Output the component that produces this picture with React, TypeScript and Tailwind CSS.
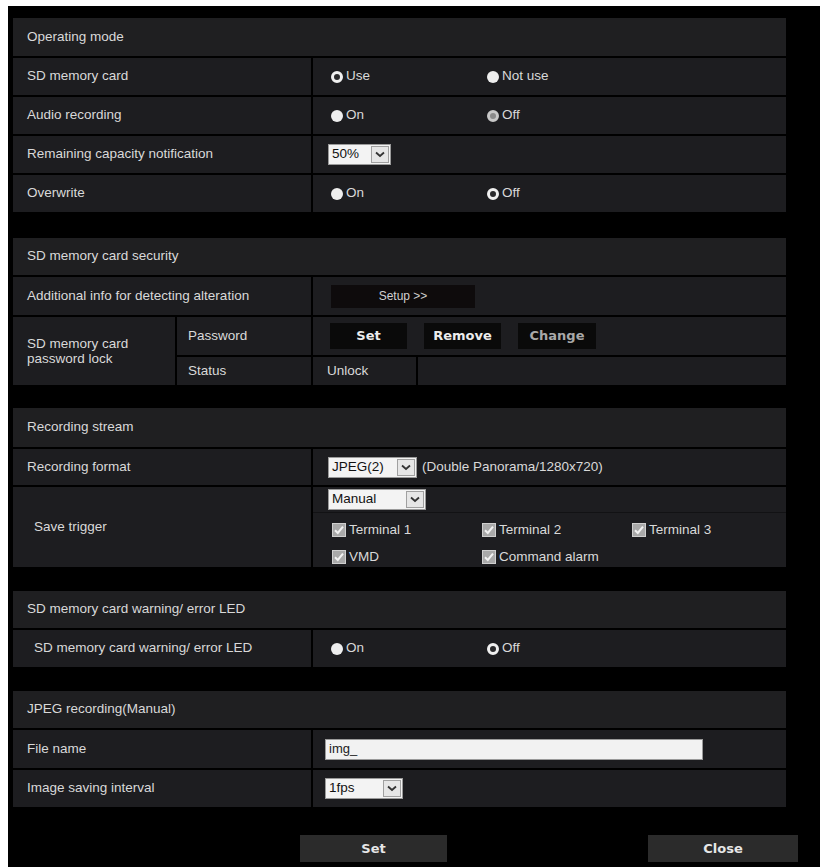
import React from 'react';

const font = { fontFamily: '"Liberation Sans", Arial, sans-serif' };

function Radio({ checked, dim, label }: { checked?: boolean; dim?: boolean; label: string }) {
  return (
    <span className="flex items-center gap-[3px]">
      {checked ? (
        <span className={`w-[12px] h-[12px] rounded-full border-[3px] ${dim ? 'border-[#c8c8c8] bg-[#8a8a8a]' : 'border-[#f0f0f0] bg-[#2a2a2c]'}`}></span>
      ) : (
        <span className="w-[12px] h-[12px] rounded-full bg-[#eeeeee]"></span>
      )}
      <span>{label}</span>
    </span>
  );
}

function Check({ label }: { label: string }) {
  return (
    <span className="flex items-center gap-[3px]">
      <svg width="14" height="14" viewBox="0 0 14 14">
        <rect x="0.5" y="0.5" width="13" height="13" fill="#a9a9a9" stroke="#cfcfcf" />
        <path d="M3 7.2 L5.8 10 L11 3.6" fill="none" stroke="#f2f2f2" strokeWidth="2" />
      </svg>
      <span>{label}</span>
    </span>
  );
}

function Select({ value, width }: { value: string; width: string }) {
  return (
    <span className={`flex items-stretch h-[21px] bg-[#f3f3f3] border border-[#9a9a9a] text-[#111] ${width}`}>
      <span className="flex-1 flex items-center pl-[3px] text-[13.5px]">{value}</span>
      <span className="w-[18px] my-[1px] mr-[1px] border border-[#a0a0a0] bg-[#e6e6e6] flex items-center justify-center">
        <svg width="10" height="7" viewBox="0 0 10 7">
          <path d="M1 1.5 L5 5 L9 1.5" fill="none" stroke="#333" strokeWidth="1.8" />
        </svg>
      </span>
    </span>
  );
}

function Header({ title, h }: { title: string; h: string }) {
  return <div className={`bg-[#1f1f21] flex items-center pl-[14px] ${h}`}>{title}</div>;
}

function Row({ label, h, children, indent }: { label: string; h: string; children?: React.ReactNode; indent?: boolean }) {
  return (
    <div className={`flex gap-[2px] ${h}`}>
      <div className={`w-[298px] bg-[#1d1d20] flex items-center ${indent ? 'pl-[21px]' : 'pl-[14px]'}`}>{label}</div>
      <div className="flex-1 bg-[#1d1d20] flex items-center pl-[18px]">{children}</div>
    </div>
  );
}

function RadioPair({ a, b }: { a: React.ReactNode; b: React.ReactNode }) {
  return (
    <div className="flex items-center">
      <div className="w-[156px]">{a}</div>
      <div>{b}</div>
    </div>
  );
}

export default function App() {
  return (
    <div className="w-[820px] h-[867px] bg-white overflow-hidden text-[13.5px] text-[#d9d9d9]" style={font}>
      <div className="ml-[8px] mt-[6px] h-[861px] bg-black pt-[12px] pl-[5px]">
        <div className="w-[773px] flex flex-col">
          {/* Operating mode */}
          <div className="flex flex-col gap-[2px]">
            <Header title="Operating mode" h="h-[38px]" />
            <Row label="SD memory card" h="h-[37px]">
              <RadioPair a={<Radio checked label="Use" />} b={<Radio label="Not use" />} />
            </Row>
            <Row label="Audio recording" h="h-[37px]">
              <RadioPair a={<Radio label="On" />} b={<Radio checked dim label="Off" />} />
            </Row>
            <Row label="Remaining capacity notification" h="h-[37px]">
              <div className="-ml-[3px]">
                <Select value="50%" width="w-[63px]" />
              </div>
            </Row>
            <Row label="Overwrite" h="h-[37px]">
              <RadioPair a={<Radio label="On" />} b={<Radio checked label="Off" />} />
            </Row>
          </div>

          {/* SD memory card security */}
          <div className="flex flex-col gap-[2px] mt-[26px]">
            <Header title="SD memory card security" h="h-[37px]" />
            <Row label="Additional info for detecting alteration" h="h-[38px]">
              <button className="w-[144px] h-[23px] bg-[#0e0b0c] text-[12px] text-[#d0d0d0]">Setup &gt;&gt;</button>
            </Row>
            <div className="flex gap-[2px]">
              <div className="w-[162px] bg-[#1d1d20] flex items-center pl-[14px] leading-[15px]">
                SD memory card
                <br />
                password lock
              </div>
              <div className="flex-1 flex flex-col gap-[2px]">
                <div className="flex gap-[2px] h-[38px]">
                  <div className="w-[134px] bg-[#1d1d20] flex items-center pl-[11px]">Password</div>
                  <div className="flex-1 bg-[#1d1d20] flex items-center pl-[17px] gap-[17px] font-bold text-[13px]" style={{ fontFamily: '"DejaVu Sans", Verdana, sans-serif' }}>
                    <button className="w-[77px] h-[26px] bg-[#0a0a0a] text-[#ececec] font-bold">Set</button>
                    <button className="w-[77px] h-[26px] bg-[#0a0a0a] text-[#ececec] font-bold">Remove</button>
                    <button className="w-[78px] h-[26px] bg-[#0a0a0a] text-[#a8a8a8] font-bold">Change</button>
                  </div>
                </div>
                <div className="flex gap-[2px] h-[28px]">
                  <div className="w-[134px] bg-[#1d1d20] flex items-center pl-[11px]">Status</div>
                  <div className="w-[103px] bg-[#1d1d20] flex items-center pl-[14px]">Unlock</div>
                  <div className="flex-1 bg-[#1d1d20]"></div>
                </div>
              </div>
            </div>
          </div>

          {/* Recording stream */}
          <div className="flex flex-col gap-[2px] mt-[23px]">
            <Header title="Recording stream" h="h-[39px]" />
            <Row label="Recording format" h="h-[36px]">
              <div className="-ml-[3px] flex items-center gap-[5px]">
                <Select value="JPEG(2)" width="w-[89px]" />
                <span>(Double Panorama/1280x720)</span>
              </div>
            </Row>
            <div className="flex gap-[2px] h-[80px]">
              <div className="w-[298px] bg-[#1d1d20] flex items-center pl-[21px]">Save trigger</div>
              <div className="flex-1 bg-[#1d1d20] flex flex-col pl-[15px]">
                <div className="h-[27px] pt-[2px] border-b border-[#121214] -ml-[15px] pl-[15px]">
                  <Select value="Manual" width="w-[98px]" />
                </div>
                <div className="flex items-center mt-[7px] pl-[4px]">
                  <div className="w-[150px]"><Check label="Terminal 1" /></div>
                  <div className="w-[150px]"><Check label="Terminal 2" /></div>
                  <div><Check label="Terminal 3" /></div>
                </div>
                <div className="flex items-center mt-[7px] pl-[4px]">
                  <div className="w-[150px]"><Check label="VMD" /></div>
                  <div><Check label="Command alarm" /></div>
                </div>
              </div>
            </div>
          </div>

          {/* SD memory card warning/ error LED */}
          <div className="flex flex-col gap-[2px] mt-[24px]">
            <Header title="SD memory card warning/ error LED" h="h-[37px]" />
            <Row label="SD memory card warning/ error LED" h="h-[37px]" indent>
              <RadioPair a={<Radio label="On" />} b={<Radio checked label="Off" />} />
            </Row>
          </div>

          {/* JPEG recording(Manual) */}
          <div className="flex flex-col gap-[2px] mt-[24px]">
            <Header title="JPEG recording(Manual)" h="h-[37px]" />
            <Row label="File name" h="h-[38px]">
              <div className="-ml-[6px] w-[378px] h-[21px] bg-[#f2f2f2] border border-[#9a9a9a] text-[#222] text-[13px] flex items-center pl-[3px]">img_</div>
            </Row>
            <Row label="Image saving interval" h="h-[37px]">
              <div className="-ml-[6px]">
                <Select value="1fps" width="w-[78px]" />
              </div>
            </Row>
          </div>

          {/* Buttons */}
          <div className="flex mt-[28px] font-bold text-[13px] text-[#e6e6e6]" style={{ fontFamily: '"DejaVu Sans", Verdana, sans-serif' }}>
            <button className="ml-[287px] w-[147px] h-[27px] bg-[#2b2b2b] font-bold shrink-0">Set</button>
            <button className="ml-[201px] w-[150px] h-[27px] bg-[#2b2b2b] font-bold shrink-0">Close</button>
          </div>
        </div>
      </div>
    </div>
  );
}
